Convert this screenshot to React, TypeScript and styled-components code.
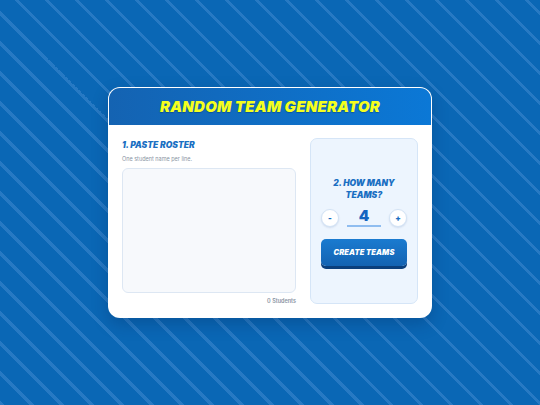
import { useState } from "react";
import styled, { createGlobalStyle } from "styled-components";

const GlobalStyle = createGlobalStyle`
  html, body {
    margin: 0;
    padding: 0;
  }
  body {
    font-family: Inter, "Noto Sans", sans-serif;
  }
  * {
    box-sizing: border-box;
  }
`;

const App = () => {
  const [roster, setRoster] = useState("");
  const [teams, setTeams] = useState(4);

  const count = roster.split("\n").filter((l) => l.trim()).length;

  return (
    <Page>
      <GlobalStyle />
      <Card>
        <Header>
          <Title>RANDOM TEAM GENERATOR</Title>
        </Header>
        <Body>
          <RosterColumn>
            <Heading>1. PASTE ROSTER</Heading>
            <Hint>One student name per line.</Hint>
            <Roster value={roster} onChange={(e) => setRoster(e.target.value)} />
            <Count>{count} Students</Count>
          </RosterColumn>
          <SidePanel>
            <Heading center>2. HOW MANY TEAMS?</Heading>
            <Counter>
              <RoundButton onClick={() => setTeams((t) => Math.max(2, t - 1))}>-</RoundButton>
              <Number>{teams}</Number>
              <RoundButton onClick={() => setTeams((t) => t + 1)}>+</RoundButton>
            </Counter>
            <CreateButton>CREATE TEAMS</CreateButton>
          </SidePanel>
        </Body>
      </Card>
    </Page>
  );
};

export default App;

const Page = styled.div`
  width: 540px;
  height: 405px;
  display: flex;
  justify-content: center;
  padding-top: 87px;
  background-color: #0a67b5;
  background-image: repeating-linear-gradient(
    45deg,
    rgba(100, 160, 225, 0.32) 0px,
    rgba(100, 160, 225, 0.32) 3px,
    transparent 3px,
    transparent 21.2px
  );
`;

const Card = styled.div`
  width: 324px;
  height: 231px;
  border-radius: 12px;
  overflow: hidden;
  background: #ffffff;
  border: 1px solid rgba(255, 255, 255, 0.45);
  box-shadow: 0 6px 16px rgba(0, 30, 80, 0.25);
  display: flex;
  flex-direction: column;
`;

const Header = styled.div`
  height: 37px;
  flex-shrink: 0;
  background: linear-gradient(90deg, #1463b2 0%, #0b78d6 100%);
  display: flex;
  align-items: center;
  justify-content: center;
`;

const Title = styled.h1`
  margin: 0;
  font-size: 15px;
  font-weight: 900;
  font-style: italic;
  color: #f4ff1e;
  letter-spacing: 0.2px;
  text-shadow: 0 1px 1px rgba(0, 40, 90, 0.35);
`;

const Body = styled.div`
  flex: 1;
  display: flex;
  gap: 14px;
  padding: 13px 13px 15px 13px;
`;

const RosterColumn = styled.div`
  flex: 1;
  display: flex;
  flex-direction: column;
  padding-top: 1px;
`;

const Heading = styled.div<{ center?: boolean }>`
  font-size: 8.5px;
  font-weight: 900;
  font-style: italic;
  color: #1a6fc2;
  line-height: 12px;
  text-align: ${(p) => (p.center ? "center" : "left")};
  width: ${(p) => (p.center ? "72px" : "auto")};
`;

const Hint = styled.div`
  font-size: 5.5px;
  color: #8a94a3;
  margin-top: 5px;
`;

const Roster = styled.textarea`
  margin-top: 6px;
  height: 125px;
  width: 100%;
  resize: none;
  border: 1.5px solid #dde7f3;
  border-radius: 6px;
  background: #f7f9fc;
  outline: none;
  font-family: inherit;
`;

const Count = styled.div`
  text-align: right;
  font-size: 5.5px;
  font-weight: 600;
  color: #8a94a3;
  margin-top: 5px;
`;

const SidePanel = styled.div`
  width: 108px;
  background: #edf5fe;
  border: 1px solid #d5e5f7;
  border-radius: 7px;
  display: flex;
  flex-direction: column;
  align-items: center;
  padding-top: 38px;
`;

const Counter = styled.div`
  display: flex;
  align-items: center;
  gap: 8px;
  margin-top: 7px;
`;

const RoundButton = styled.button`
  width: 18px;
  height: 18px;
  border-radius: 50%;
  border: 1.5px solid #d3e3f5;
  background: #ffffff;
  color: #1a6fc2;
  font-size: 8px;
  font-weight: 900;
  padding: 0;
  display: flex;
  align-items: center;
  justify-content: center;
  font-family: inherit;
  box-shadow: 0 1px 2px rgba(0, 50, 120, 0.12);
`;

const Number = styled.div`
  width: 34px;
  text-align: center;
  font-size: 15px;
  font-weight: 900;
  color: #1565c0;
  line-height: 16px;
  border-bottom: 2px solid #8fbdf0;
  padding-bottom: 1px;
`;

const CreateButton = styled.button`
  margin-top: 12px;
  width: 86px;
  height: 27px;
  border: none;
  border-radius: 5px;
  background: linear-gradient(180deg, #1a7bd0 0%, #1463b2 100%);
  box-shadow: 0 3px 0 #0b3f7c;
  color: #ffffff;
  font-family: inherit;
  font-size: 7.5px;
  font-weight: 900;
  font-style: italic;
  letter-spacing: 0.1px;
`;
